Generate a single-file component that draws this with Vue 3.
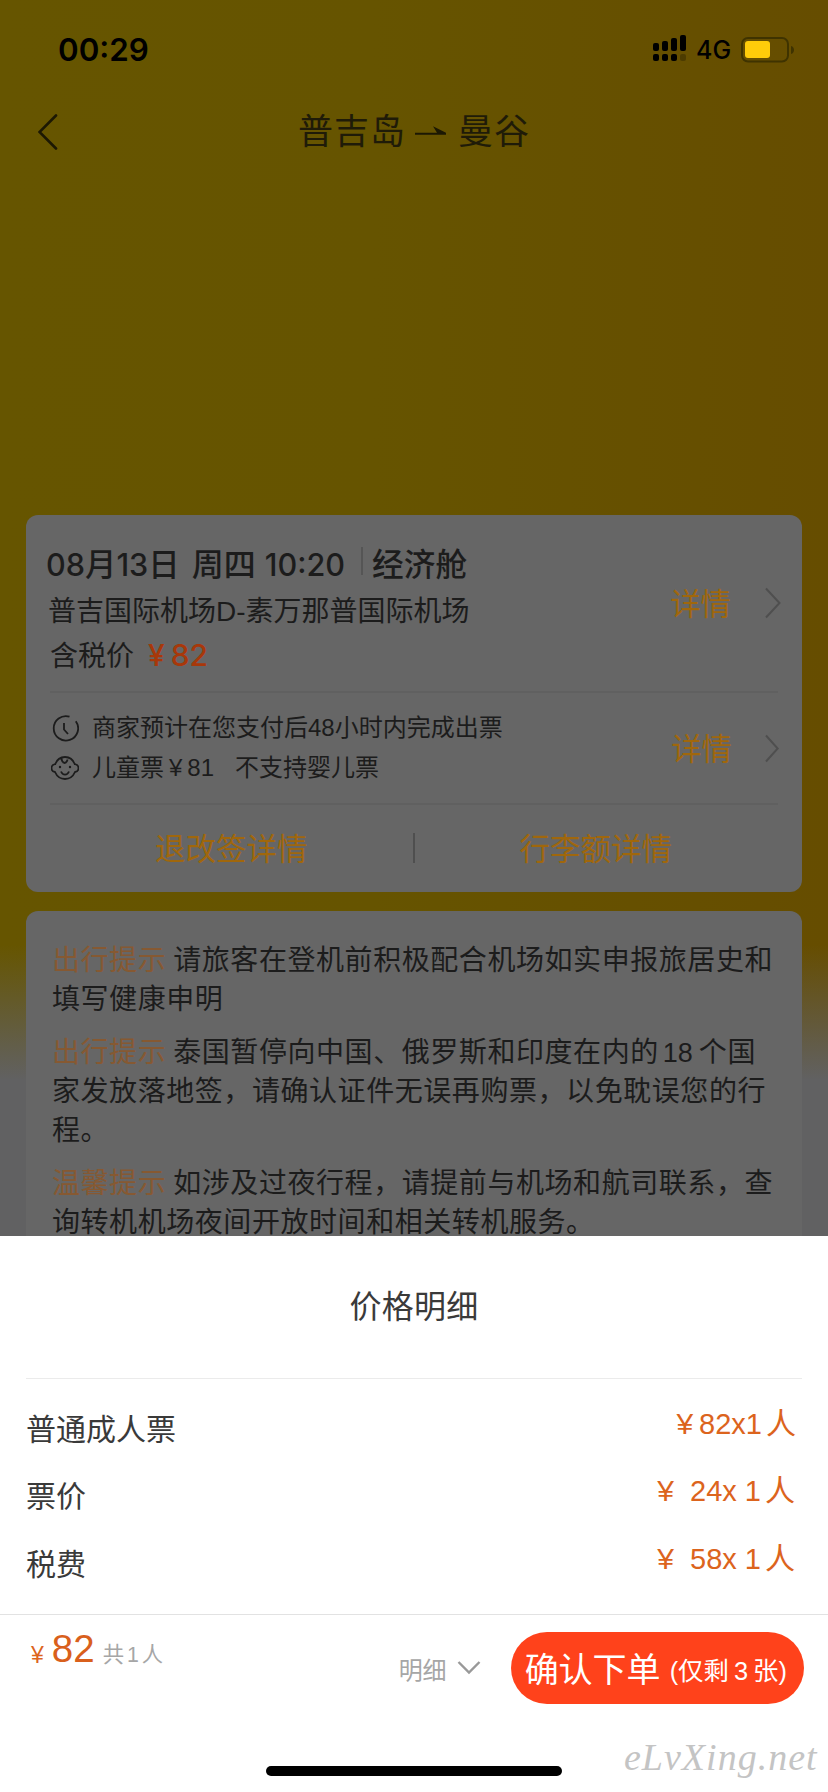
<script setup>
const tips = [
  {
    tag: '出行提示',
    lines: [
      [{ t: '请旅客在登机前积极配合机场如实申报旅居史和' }],
      [{ t: '填写健康申明' }],
    ],
  },
  {
    tag: '出行提示',
    lines: [
      [{ t: '泰国暂停向中国、俄罗斯和印度在内的' }, { t: '18', num: true }, { t: '个国' }],
      [{ t: '家发放落地签，请确认证件无误再购票，以免耽误您的行' }],
      [{ t: '程。' }],
    ],
  },
  {
    tag: '温馨提示',
    lines: [
      [{ t: '如涉及过夜行程，请提前与机场和航司联系，查' }],
      [{ t: '询转机机场夜间开放时间和相关转机服务。' }],
    ],
  },
]
const prices = [
  { label: '普通成人票', amount: '82x1', tight: true },
  { label: '票价', amount: '24x 1' },
  { label: '税费', amount: '58x 1' },
]
</script>

<template>
  <div class="screen">
    <header class="status">
      <span class="time">00:29</span>
      <svg class="signal" width="34" height="27" viewBox="0 0 34 27">
        <rect x="0" y="8" width="6" height="8" rx="2" />
        <rect x="9" y="6" width="6" height="10" rx="2" />
        <rect x="18" y="3" width="6" height="13" rx="2" />
        <rect x="27" y="0" width="6" height="16" rx="2" />
        <rect x="0" y="19" width="6" height="7" rx="2" />
        <rect x="9" y="19" width="6" height="7" rx="2" />
        <rect x="18" y="19" width="6" height="7" rx="2" />
        <rect x="27" y="19" width="6" height="7" rx="2" opacity=".25" />
      </svg>
      <span class="net">4G</span>
      <svg class="battery" width="54" height="26" viewBox="0 0 54 26">
        <rect x="1" y="1" width="46" height="23.5" rx="6" fill="none" stroke="#3f3300" stroke-width="2" />
        <rect x="4" y="4" width="25" height="17" rx="3" fill="#ffcc0a" />
        <path d="M50 9c4 1 4 7 0 8z" fill="#3f3300" />
      </svg>
    </header>

    <nav class="nav">
      <svg class="back" width="20" height="36" viewBox="0 0 20 36">
        <path d="M18 1.5 1.5 18 18 34.5" />
      </svg>
      <span class="from">普吉岛</span>
      <svg class="arrow" width="32" height="12" viewBox="0 0 32 12">
        <path d="M0 7.800h22L18 1.200 31 7.800v2H0z" />
      </svg>
      <span class="to">曼谷</span>
    </nav>

    <section class="card flight">
      <div class="block summary">
        <div class="info">
          <div class="when">
            <span class="date">08<i>月</i>13<i>日</i></span>
            <i class="week">周四</i>
            <span class="clock">10:20</span>
            <span class="bar"></span>
            <i class="cabin">经济舱</i>
          </div>
          <div class="route">普吉国际机场D-素万那普国际机场</div>
          <div class="tax"><span>含税价</span><em class="yen">¥</em><em>82</em></div>
        </div>
        <span class="more">详情</span>
        <svg class="chev" width="16" height="32" viewBox="0 0 16 32"><path d="M1 1.5 14.5 16 1 30.5" /></svg>
      </div>
      <div class="block notes">
        <div class="info">
          <div class="note">
            <svg width="28" height="28" viewBox="0 0 28 28">
              <path d="M24.8 7.2A12.2 12.2 0 1 1 18.5 2.7M13 9v6.5l4 4.5" />
            </svg>
            <span>商家预计在您支付后48小时内完成出票</span>
          </div>
          <div class="note child">
            <svg width="28" height="28" viewBox="0 0 28 28">
              <path d="M4.2 10.2C6 5.500 9.500 3 14 3s8 2.500 9.800 7.200c2.700.4 3.700 1.900 3.700 3.800s-1.200 3.700-3.500 4c-2 4.500-5.500 7-10 7s-8-2.500-10-7C1.700 17.700.5 15.900.5 14s1-3.400 3.700-3.800zM10.500 4.500c.2 2.500 1.300 4 3 4.500 1.700-.4 2.800-1.600 3-3.500M10 17.500c1.700 4.200 6.300 4.200 8 0" />
              <circle cx="9" cy="13" r="1.2" /><circle cx="19" cy="13" r="1.2" />
            </svg>
            <span>儿童票</span><b class="y">¥</b><b>81</b><span class="infant">不支持婴儿票</span>
          </div>
        </div>
        <span class="more">详情</span>
        <svg class="chev" width="14" height="29" viewBox="0 0 14 29"><path d="M1 1.500 12.700 14.500 1 27.500" /></svg>
      </div>
      <div class="links">
        <span>退改签详情</span>
        <i class="sep"></i>
        <span class="bag">行李额详情</span>
      </div>
    </section>

    <section class="card tips">
      <div v-for="(tip, n) in tips" :key="n" class="tip">
        <div v-for="(line, k) in tip.lines" :key="k" class="line">
          <span v-if="k === 0" class="tag">{{ tip.tag }}</span>
          <span v-for="(part, p) in line" :key="p" :class="{ num: part.num }">{{ part.t }}</span>
        </div>
      </div>
    </section>

    <section class="sheet">
      <h2>价格明细</h2>
      <div class="rows">
        <div v-for="row in prices" :key="row.label" class="row" :class="{ tight: row.tight }">
          <span class="label">{{ row.label }}</span>
          <span class="yen">¥</span>
          <span class="amount">{{ row.amount }}</span>
          <span class="person">人</span>
        </div>
      </div>
      <footer class="footer">
        <span class="cur">¥</span>
        <span class="total">82</span>
        <span class="count">共<b>1</b>人</span>
        <span class="detail">明细</span>
        <svg class="down" width="24" height="16" viewBox="0 0 24 16"><path d="M1.500 2 12 12.500 22.500 2" /></svg>
        <button class="submit">
          <span class="main">确认下单</span>
          <span class="left">(仅剩<b>3</b>张)</span>
        </button>
      </footer>
      <div class="home"></div>
      <div class="watermark">eLvXing.net</div>
    </section>
  </div>
</template>

<style>
body {
  margin: 0;
}
</style>

<style scoped>
.screen {
  position: relative;
  box-sizing: border-box;
  width: 828px;
  height: 1792px;
  overflow: hidden;
  display: flex;
  flex-direction: column;
  font-family: "Liberation Sans", "Noto Sans CJK SC", sans-serif;
  font-weight: 400;
  color: #1c1c1c;
  white-space: nowrap;
  background:
    linear-gradient(180deg, rgba(97, 97, 98, 0) 945px, rgba(97, 97, 98, 0.45) 1005px, #616162 1080px),
    linear-gradient(90deg, #665500 0%, #665400 45%, #664d00 100%);
}
i,
em,
b {
  font-style: normal;
  font-weight: inherit;
}
svg {
  flex: none;
  display: block;
}
.status {
  display: flex;
  align-items: flex-start;
  height: 90px;
  padding: 30px 33px 0 58px;
  box-sizing: border-box;
  color: #000;
  font-family: Inter, sans-serif;
}
.time {
  flex: 1;
  font-size: 31.3px;
  font-weight: 600;
  line-height: 40px;
}
.signal {
  margin-top: 5px;
}
.net {
  width: 45px;
  padding-left: 9px;
  box-sizing: border-box;
  margin-right: 9px;
  font-size: 25px;
  font-weight: 500;
  line-height: 41px;
}
.battery {
  margin-top: 7px;
}
.nav {
  display: flex;
  align-items: center;
  height: 84px;
  padding-left: 38px;
  font-size: 35px;
  line-height: 50px;
  letter-spacing: 1px;
  color: #1f1b08;
}
.back path {
  fill: none;
  stroke: #1c1803;
  stroke-width: 2.6;
  stroke-linecap: round;
}
.from {
  margin-left: 240px;
}
.arrow {
  margin: 0 11px 2px 9px;
  fill: #1c1803;
}
.card {
  margin: 0 26px;
  border-radius: 12px;
  background: #666;
}
.flight {
  margin-top: 341px;
  height: 377px;
}
.block {
  display: flex;
  align-items: center;
  box-sizing: border-box;
  margin: 0 24px;
  border-bottom: 2px solid #606060;
}
.summary {
  height: 178px;
}
.info {
  flex: 1;
  align-self: flex-start;
}
.when {
  display: flex;
  height: 50px;
  margin: 25px 0 0 -4px;
  line-height: 49px;
  font-family: Inter, "Noto Sans CJK SC", sans-serif;
  font-size: 30.6px;
  font-weight: 500;
}
.date i {
  font-size: 31.4px;
}
.week {
  margin-left: 12px;
  font-size: 32px;
}
.clock {
  margin-left: 9px;
}
.bar {
  width: 2px;
  height: 28px;
  margin: 7px 9px 0 16px;
  background: #555;
}
.cabin {
  font-size: 31.7px;
}
.route {
  height: 44px;
  margin-left: -2px;
  font-size: 28px;
  line-height: 44px;
}
.tax {
  display: flex;
  font-size: 28px;
  line-height: 45px;
}
.tax em {
  color: #a8380a;
  font-family: Inter, sans-serif;
  font-size: 30px;
  font-weight: 500;
  line-height: 43px;
}
.tax .yen {
  margin: 0 6px 0 14px;
}
.more {
  font-size: 30.4px;
  line-height: 40px;
  margin-top: 2px;
  color: #a0670c;
}
.chev {
  margin: 0 -3px 0 34px;
}
.chev path {
  fill: none;
  stroke: #4f4f4f;
  stroke-width: 2;
}
.notes {
  height: 112px;
}
.notes .chev {
  margin: 0 -1px 0 33px;
}
.note {
  display: flex;
  align-items: center;
  height: 40px;
  font-size: 24px;
  line-height: 36px;
}
.notes .info {
  padding-top: 15px;
}
.note svg {
  margin: 0 13px 0 1px;
  fill: none;
  stroke: #1c1c1c;
  stroke-width: 1.8;
}
.note circle {
  fill: #1c1c1c;
  stroke: none;
}
.note .y {
  margin-left: 5px;
  margin-right: 5px;
}
.note .infant {
  margin-left: 21px;
}
.links {
  display: flex;
  align-items: center;
  height: 87px;
  padding-left: 129px;
  font-size: 30.5px;
  line-height: 44px;
  color: #a0670c;
}
.sep {
  width: 2px;
  height: 30px;
  margin: 0 105px 2px 105px;
  background: #4f4f4f;
}
.tips {
  margin-top: 19px;
  height: 360px;
  padding: 30px 0 0 26px;
  box-sizing: border-box;
}
.tip {
  margin-bottom: 14px;
}
.line {
  display: flex;
  height: 39px;
  line-height: 40px;
  font-size: 28px;
  letter-spacing: 0.56px;
}
.tag {
  margin-right: 7px;
  color: #865932;
}
.num {
  margin: 0 6px 0 4px;
  font-size: 27px;
  letter-spacing: 0;
}
.sheet {
  position: absolute;
  left: 0;
  top: 1236px;
  width: 828px;
  height: 556px;
  background: #fff;
  color: #3a3a3a;
}
h2 {
  margin: 0 26px;
  height: 143px;
  box-sizing: border-box;
  border-bottom: 1px solid #ebebeb;
  font-size: 32px;
  line-height: 142px;
  font-weight: 400;
  text-align: center;
  letter-spacing: 0.3px;
}
.rows {
  height: 235px;
  padding-top: 17px;
  box-sizing: border-box;
}
.row {
  display: flex;
  height: 67.4px;
  padding: 0 33px 0 26px;
  font-size: 30px;
  line-height: 56px;
  color: #dc641d;
}
.label {
  flex: 1;
  color: #3a3a3a;
  line-height: 68px;
}
.amount {
  font-size: 29px;
}
.row .yen {
  margin-right: 16px;
}
.tight {
  padding-right: 32px;
}
.tight .yen {
  margin-right: 6px;
}
.person {
  margin-left: 4px;
}
.footer {
  display: flex;
  align-items: flex-start;
  height: 100px;
  border-top: 1px solid #e2e2e2;
  padding-left: 31px;
  color: #a6a6a6;
}
.cur {
  margin-top: 27px;
  font-size: 23px;
  line-height: 26px;
  color: #dc641d;
}
.total {
  margin: 13px 0 0 8px;
  font-size: 38.500px;
  line-height: 42px;
  color: #d9601c;
}
.count {
  width: 62px;
  margin: 24px 0 0 8px;
  font-size: 21.3px;
  line-height: 32px;
}
.count b {
  margin: 0 3px;
}
.detail {
  margin: 37px 0 0 234px;
  font-size: 24px;
  line-height: 38px;
}
.down {
  margin: 45px 0 0 10px;
  fill: none;
  stroke: #999;
  stroke-width: 2.400;
}
.submit {
  display: flex;
  align-items: center;
  width: 293px;
  height: 72px;
  margin: 17px 0 0 30px;
  padding: 0 0 2px 14px;
  border: 0;
  border-radius: 36px;
  background: #ff421b;
  color: #fff;
  font: inherit;
}
.main {
  font-size: 34px;
}
.left {
  margin: 4px 0 0 9px;
  font-size: 25.4px;
}
.left b {
  margin: 0 5px;
}
.home {
  width: 296px;
  height: 10px;
  margin: 51px 0 0 266px;
  border-radius: 5px;
  background: #000;
}
.watermark {
  position: absolute;
  left: 624px;
  top: 496px;
  font: italic 38px/50px "Liberation Serif", serif;
  color: #c4c4c4;
  letter-spacing: 1px;
}
</style>
